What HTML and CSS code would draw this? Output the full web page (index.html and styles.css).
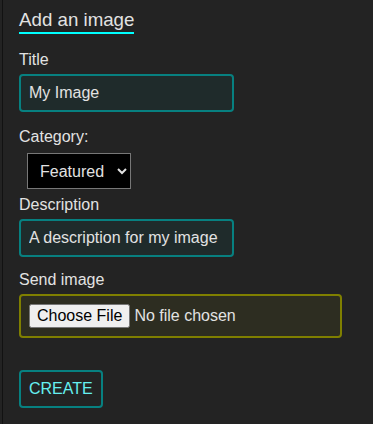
FILE: index.html
```html
<!DOCTYPE html>
<html lang="en">
<head>
  <meta charset="UTF-8">
  <meta name="viewport" content="width=device-width, initial-scale=1">
  <title>Add an image</title>
  <link rel="stylesheet" href="styles.css">
</head>
<body>
  <div class="panel">
    <h3 class="panel-title">Add an image</h3>

    <form class="image-form">
      <label for="title">Title</label>
      <input type="text" id="title" class="text-field" value="My Image">

      <label for="category" class="label-category">Category:</label>
      <select id="category" class="category-select">
        <option>Featured</option>
        <option>Recent</option>
        <option>Archived</option>
      </select>

      <label for="description" class="label-description">Description</label>
      <input type="text" id="description" class="text-field" value="A description for my image">

      <label for="file" class="label-file">Send image</label>
      <div class="file-box">
        <input type="file" id="file">
      </div>

      <button type="submit" class="create-btn">CREATE</button>
    </form>
  </div>
</body>
</html>
```

FILE: styles.css
```css
/* General Styles */
* {
  box-sizing: border-box;
}

body {
  margin: 0;
  background-color: #232323;
  color: #e2e2e2;
  font-family: 'Liberation Sans', Arial, sans-serif;
  font-size: 16px;
}

/* Panel */
.panel {
  margin-left: 2px;
  min-height: 424px;
  border-left: 1px solid #121212;
  padding: 9px 16px 0;
}

.panel-title {
  display: inline-block;
  margin: 0;
  font-size: 18.72px;
  font-weight: 400;
  padding-bottom: 1px;
  border-bottom: 2px solid #00ffff;
}

/* Form Styles */
.image-form {
  display: flex;
  flex-direction: column;
  align-items: flex-start;
  padding-top: 17px;
}

.image-form label {
  margin-bottom: 5px;
}

.text-field {
  width: 215px;
  font-family: inherit;
  font-size: 16px;
  color: #e2e2e2;
  background-color: #1f2b2b;
  padding: 8px;
  border: 2px solid #078080;
  border-radius: 4px;
  outline: none;
}

.label-category {
  margin-top: 16px;
}

.category-select {
  margin: 2px 0 0 8px;
  width: 104px;
  height: 36px;
  padding: 0 6px 0 8px;
  font-family: inherit;
  font-size: 16px;
  color: #e2e2e2;
  background-color: #000;
  border: 1px solid #777;
  border-radius: 0;
}

.label-description {
  margin-top: 7px;
}

.label-file {
  margin-top: 14px;
}

.file-box {
  width: 323px;
  padding: 8px;
  background-color: #2d2d21;
  border: 2px solid #7f7f00;
  border-radius: 4px;
}

.file-box input {
  font-family: inherit;
  font-size: 16px;
  color: #e2e2e2;
}

.create-btn {
  margin-top: 32px;
  padding: 8px;
  font-family: inherit;
  font-size: 16px;
  color: #66f0f0;
  background: transparent;
  border: 2px solid #078080;
  border-radius: 4px;
  cursor: pointer;
}
```
